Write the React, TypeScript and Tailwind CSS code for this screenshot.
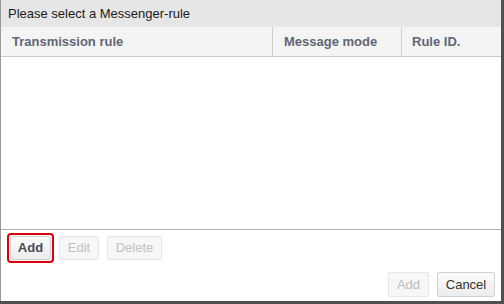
import React from "react";

export default function App() {
  const font = { fontFamily: '"Liberation Sans", Arial, sans-serif' };
  return (
    <div className="w-[504px] h-[304px] bg-[#505050] overflow-hidden" style={font}>
      <div className="w-[501px] h-[301px] bg-white border-l border-[#9a9a9a] flex flex-col">
        <div className="h-[27px] bg-[#e6e6e6] flex items-center pl-[7px] text-[13px] text-[#1a1a1a]">
          Please select a Messenger-rule
        </div>
        <div className="h-[30px] bg-[#f4f4f4] border-b border-[#cacaca] flex text-[13px] font-bold text-[#606675]">
          <div className="w-[272px] border-r border-[#d0d0d0] flex items-center pl-[11px]">Transmission rule</div>
          <div className="w-[129px] border-r border-[#d0d0d0] flex items-center pl-[11px]">Message mode</div>
          <div className="flex-1 flex items-center pl-[10px]">Rule ID.</div>
        </div>
        <div className="h-[173px] border-b border-[#b0b0b0]"></div>
        <div className="flex items-start pl-[6px] pt-[3px]">
          <div className="border-2 border-[#d8000c] rounded-[4px] p-[1px]">
            <button className="w-[41px] h-[24px] rounded-[2px] border border-[#d2d2d2] bg-gradient-to-b from-[#fbfbfb] to-[#ececec] text-[13px] font-bold text-[#4a4a55] flex items-center justify-center">
              Add
            </button>
          </div>
          <button className="ml-[5px] mt-[3px] w-[40px] h-[24px] rounded-[2px] border border-[#e6e6e6] bg-[#f7f7f7] text-[13px] text-[#c0c0c0] flex items-center justify-center">
            Edit
          </button>
          <button className="ml-[8px] mt-[3px] w-[55px] h-[24px] rounded-[2px] border border-[#e6e6e6] bg-[#f7f7f7] text-[13px] text-[#c0c0c0] flex items-center justify-center">
            Delete
          </button>
        </div>
        <div className="flex justify-end pr-[6px] mt-[9px] gap-[8px]">
          <button className="w-[41px] h-[25px] rounded-[2px] border border-[#e6e6e6] bg-[#f7f7f7] text-[13px] text-[#bdbdbd] flex items-center justify-center">
            Add
          </button>
          <button className="w-[58px] h-[25px] rounded-[2px] border border-[#d2d2d2] bg-gradient-to-b from-[#fbfbfb] to-[#ececec] text-[13px] text-[#333] flex items-center justify-center">
            Cancel
          </button>
        </div>
      </div>
    </div>
  );
}
